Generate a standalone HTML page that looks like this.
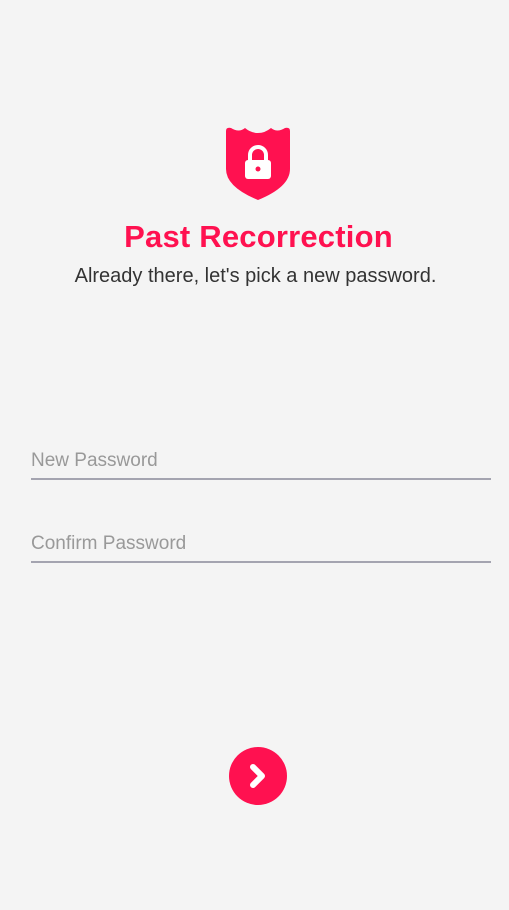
<!DOCTYPE html>
<html><head><style>
body{margin:0;width:509px;height:910px;background:#f4f4f4;font-family:"Liberation Sans",sans-serif;position:relative;overflow:hidden}
.t{position:absolute;left:0;width:509px;text-align:center}
.in{position:absolute;left:31px;width:460px;border-bottom:2px solid #a4a4b0;color:#999;font-size:19px;padding-bottom:6px}
</style></head><body>
<svg style="position:absolute;left:226px;top:127px" width="64" height="74" viewBox="0 0 64 74">
<path d="M0 4 Q0 0 5 1 Q13 6 19 1 Q25 6 32 6 Q39 6 45 1 Q51 6 59 1 Q64 0 64 4 L64 42 Q64 60 32 73 Q0 60 0 42 Z" fill="#ff1150"/>
<rect x="19" y="33" width="26" height="19" rx="3" fill="#fff"/>
<path d="M24 34 V28 A8 8 0 0 1 40 28 V34" fill="none" stroke="#fff" stroke-width="4"/>
<circle cx="32" cy="42" r="2.5" fill="#ff1150"/>
</svg>
<div class="t" style="top:219px;left:4px;font-size:31px;font-weight:bold;color:#ff1150;letter-spacing:0.2px">Past Recorrection</div>
<div class="t" style="top:265px;left:1px;font-size:20px;color:#333;letter-spacing:0px">Already there, let's pick a new password.</div>
<div class="in" style="top:450px">New Password</div>
<div class="in" style="top:533px">Confirm Password</div>
<svg style="position:absolute;left:229px;top:747px" width="58" height="58" viewBox="0 0 58 58">
<circle cx="29" cy="29" r="29" fill="#ff1150"/>
<path d="M24 20 L33 29 L24 38" fill="none" stroke="#fff" stroke-width="6" stroke-linecap="round" stroke-linejoin="round"/>
</svg>
</body></html>
